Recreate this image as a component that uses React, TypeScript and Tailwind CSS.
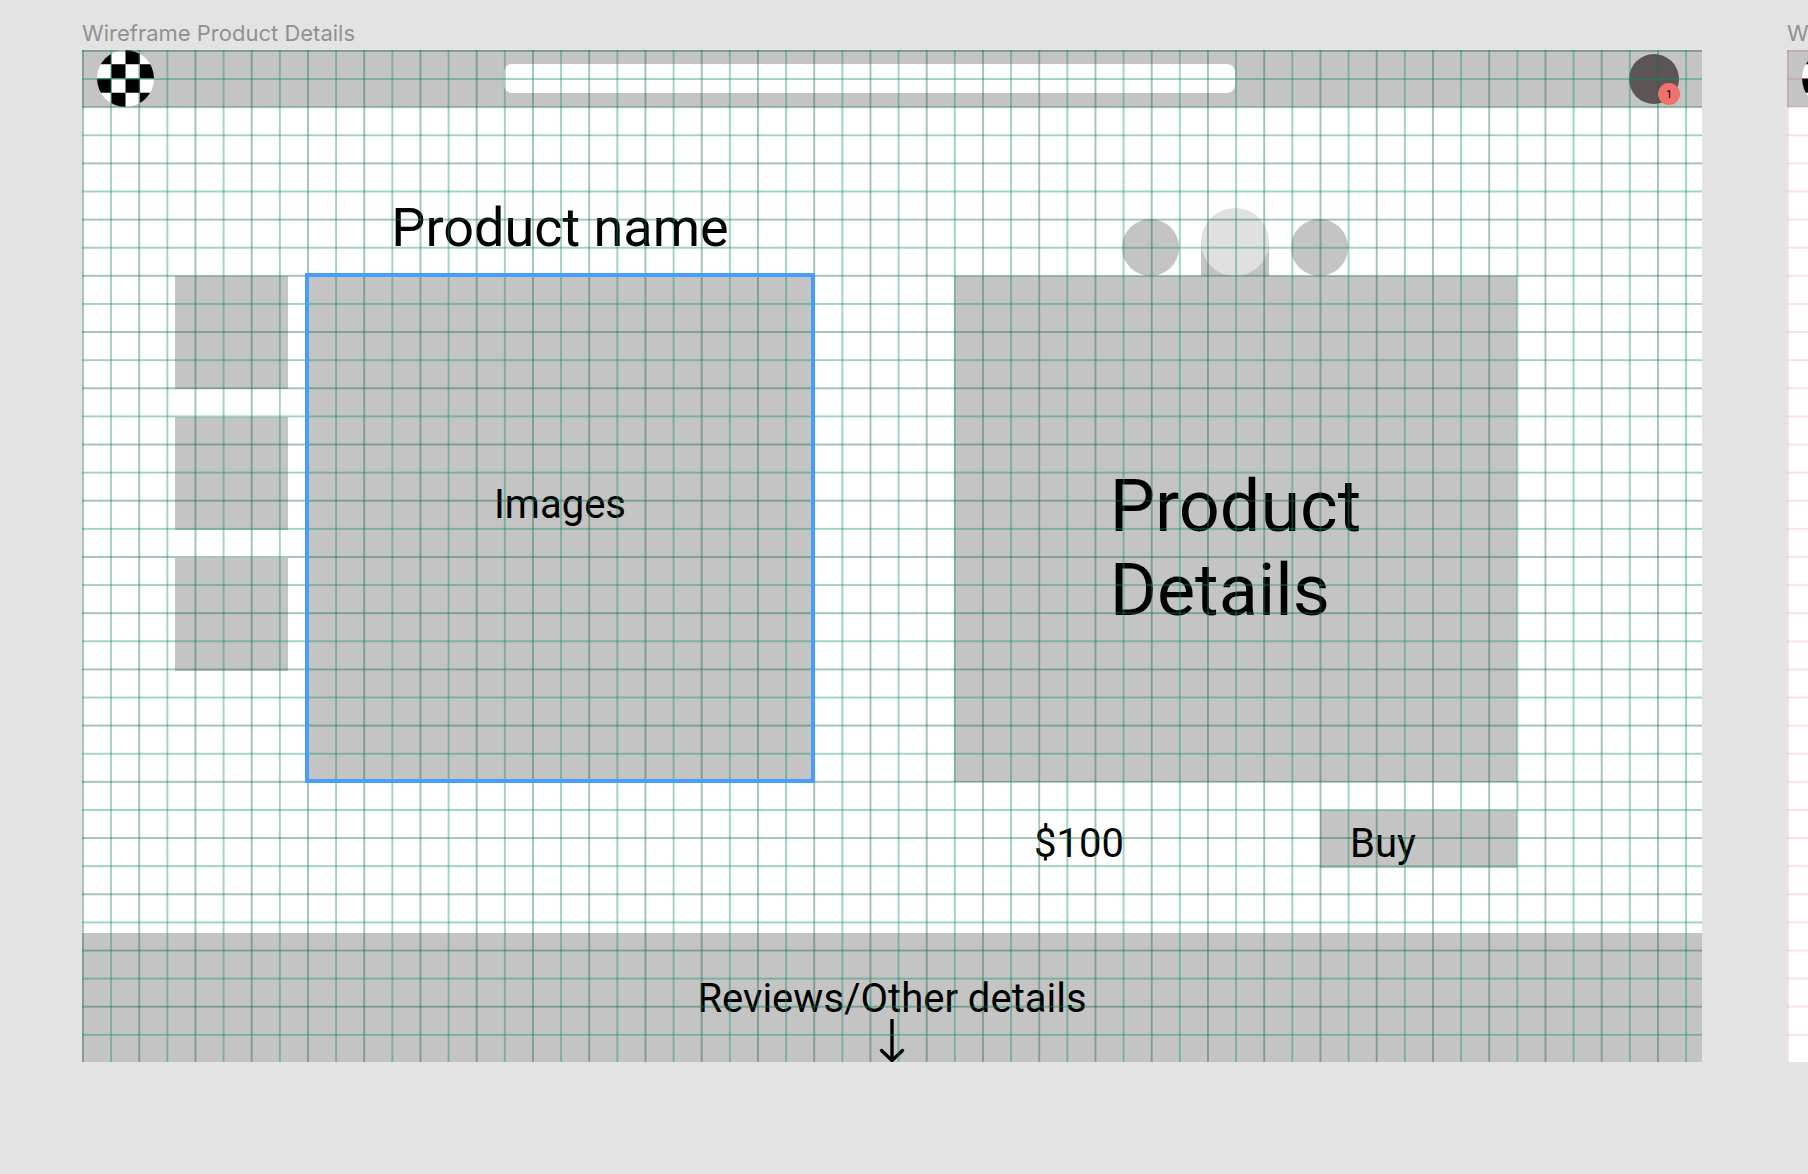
import React from "react";

function GridLines({ id, odd, even }: { id: string; odd: string; even: string }) {
  const columns = Array.from({ length: 58 }, (_, i) => i);
  const rows = Array.from({ length: 36 }, (_, i) => i);
  return (
    <svg
      data-grid={id}
      aria-hidden="true"
      className="pointer-events-none absolute inset-0 h-full w-full"
      viewBox="0 0 1440 900"
      preserveAspectRatio="none"
    >
      {columns.map((i) => (
        <rect key={`c${i}`} x={i * 25} y="0" width="1.7" height="900" className={i % 2 ? odd : even} />
      ))}
      {rows.map((i) => (
        <rect key={`r${i}`} x="0" y={i * 25} width="1440" height="1.7" className={i % 2 ? odd : even} />
      ))}
    </svg>
  );
}

function CheckerLogo({ id }: { id: string }) {
  const cells = Array.from({ length: 16 }, (_, i) => i);
  return (
    <svg viewBox="0 0 4 4" className="block size-[57px] shrink-0" role="img" aria-label="Home">
      <clipPath id={id}>
        <circle cx="2" cy="2" r="2" />
      </clipPath>
      <g clipPath={`url(#${id})`}>
        <rect width="4" height="4" fill="#fff" />
        {cells
          .filter((i) => ((i % 4) + Math.floor(i / 4)) % 2 === 0)
          .map((i) => (
            <rect key={i} x={i % 4} y={Math.floor(i / 4)} width="1" height="1" fill="#000" />
          ))}
      </g>
    </svg>
  );
}

function ProductFrame() {
  return (
    <section className="min-w-0 flex-1">
      <h2 className="flex h-[50px] items-end pb-[3px] font-[Inter] text-[22px] leading-[28px] whitespace-nowrap text-[#919191]">
        Wireframe Product Details
      </h2>
      <div className="relative bg-white">
        <header className="grid h-[57px] grid-cols-[422fr_731fr_467fr] items-center bg-[#c4c4c4]">
          <div className="pl-[15px]">
            <CheckerLogo id="logo-main" />
          </div>
          <input aria-label="Search" className="h-[29px] w-full rounded-lg bg-white px-3 text-base outline-none" />
          <div className="flex justify-end pr-[23px]">
            <button aria-label="Cart" className="size-[50px] rounded-full bg-[#5d5555]" />
          </div>
        </header>

        <main className="grid h-[826px] grid-cols-[93fr_113fr_18fr_508fr_140fr_563fr_185fr] grid-rows-[169px_506px_28px_57px] text-black">
          <h1 className="col-start-4 row-start-1 self-end pb-[16px] text-center text-[54px] leading-[64px] whitespace-nowrap">
            Product name
          </h1>
          <div className="col-start-6 row-start-1 flex items-end justify-center gap-[22px] pr-[2px]">
            <button aria-label="Previous option" className="size-[57px] rounded-full bg-[#c4c4c4]" />
            <div className="flex h-[68px] w-[68px] bg-linear-to-b from-transparent from-50% to-[#c4c4c4] to-50%">
              <button aria-label="Selected option" className="size-[68px] rounded-full bg-[#e0e0e0]" />
            </div>
            <button aria-label="Next option" className="size-[57px] rounded-full bg-[#c4c4c4]" />
          </div>

          <div className="col-start-2 row-start-2 flex flex-col gap-[28px]">
            <button aria-label="Image 1" className="h-[113px] bg-[#c4c4c4]" />
            <button aria-label="Image 2" className="h-[113px] bg-[#c4c4c4]" />
            <button aria-label="Image 3" className="h-[113px] bg-[#c4c4c4]" />
          </div>
          <div className="col-start-4 row-start-2 flex items-center justify-center bg-[#c4c4c4] pb-[48px] text-[40px] leading-[48px]">
            Images
          </div>
          <div className="col-start-6 row-start-2 flex justify-center bg-[#c4c4c4] pt-[189px] text-[72px] leading-[84px]">
            <p>
              Product
              <br />
              Details
            </p>
          </div>

          <div className="col-start-6 row-start-4 grid grid-cols-[366fr_197fr] text-[40px] leading-[48px]">
            <p className="pt-[10px] pl-[80px]">$100</p>
            <button className="bg-[#c4c4c4] pt-[9px] pl-[30px] text-left">Buy</button>
          </div>
        </main>

        <footer className="flex h-[129px] flex-col items-center bg-[#c4c4c4] pt-[41px] text-[40px] leading-[50px] text-black">
          <p className="whitespace-nowrap">Reviews/Other details</p>
          <svg viewBox="0 0 28 44" className="-mt-[6px] h-[44px] w-[28px] shrink-0" fill="none" stroke="#000" strokeWidth="3.4" strokeLinecap="round" aria-hidden="true">
            <path d="M14 1V42" strokeLinecap="butt" />
            <path d="M3.5 32.5L14 42.5L24.5 32.5" />
          </svg>
        </footer>

        <GridLines id="main" odd="fill-[#109068]/40" even="fill-[#146c48]/40" />

        <div className="pointer-events-none absolute inset-x-0 top-[223px] grid grid-cols-[223fr_510fr_887fr]">
          <div className="col-start-2 h-[510px] border-4 border-[#459ff5]" />
        </div>
        <span className="absolute top-[33px] right-[22px] flex size-[22px] items-center justify-center rounded-full bg-[#ee716c] text-[11px] leading-none text-black">
          1
        </span>
      </div>
    </section>
  );
}

function NextFrame() {
  return (
    <section className="w-[21px] shrink-0 overflow-hidden">
      <h2 className="flex h-[50px] items-end pb-[3px] font-[Inter] text-[22px] leading-[28px] whitespace-nowrap text-[#919191]">W</h2>
      <div className="relative h-[1012px] overflow-hidden bg-white">
        <div className="flex h-[57px] items-center bg-[#c4c4c4] pl-[15px]">
          <CheckerLogo id="logo-next" />
        </div>
        <div className="absolute inset-y-0 left-0 w-[1620px]">
          <GridLines id="next" odd="fill-[#ff0000]/12" even="fill-[#ff0000]/12" />
        </div>
      </div>
    </section>
  );
}

export default function App() {
  return (
    <div className="flex min-h-screen gap-[85px] overflow-hidden bg-[#e3e3e3] pl-[82px] font-[Roboto]">
      <ProductFrame />
      <NextFrame />
    </div>
  );
}
